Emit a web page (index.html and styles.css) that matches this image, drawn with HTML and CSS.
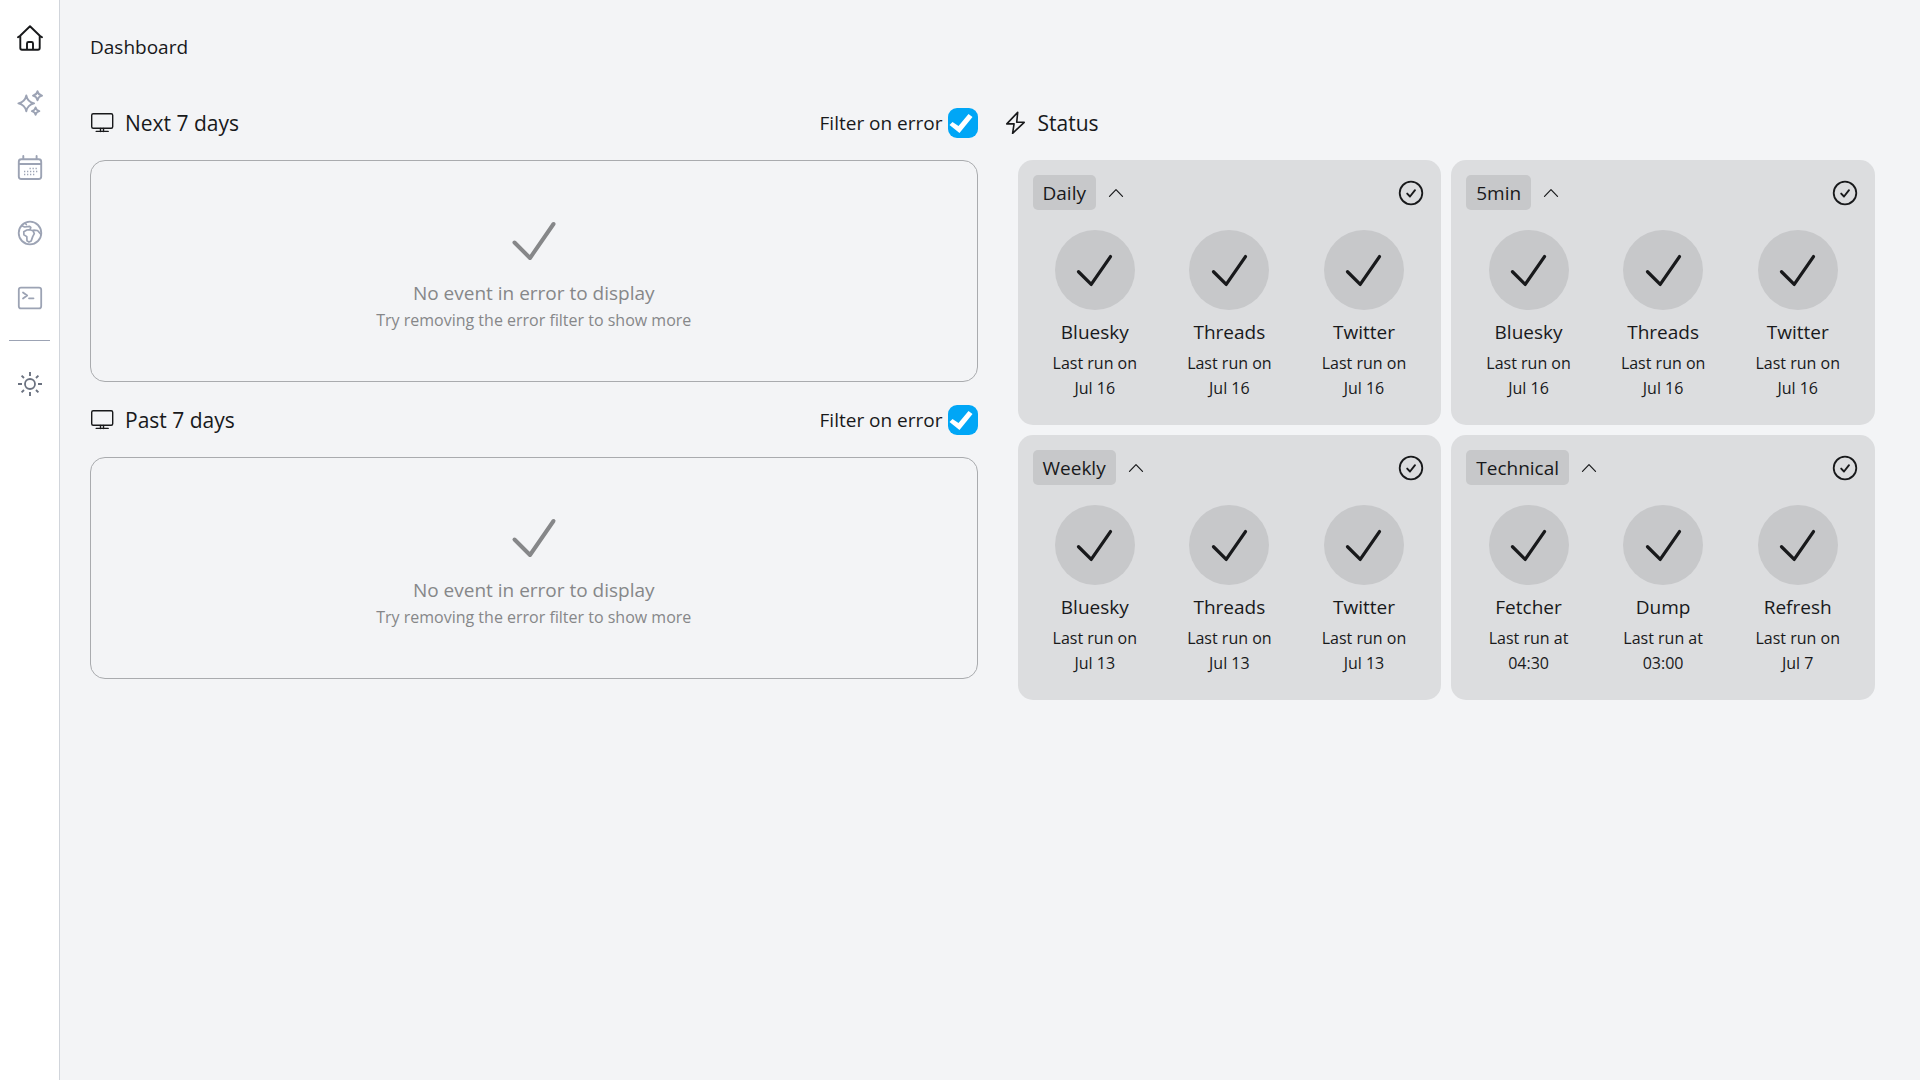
FILE: index.html
```html
<!DOCTYPE html>
<html lang="en">
<head>
<meta charset="utf-8">
<meta name="viewport" content="width=device-width, initial-scale=1">
<title>Dashboard</title>
<link rel="stylesheet" href="styles.css">
</head>
<body>
<svg class="sprite" aria-hidden="true">
  <symbol id="check" viewBox="0 0 50 50"><path d="M5.5 26.5 21 42 44.5 8" stroke-width="4"/></symbol>
  <symbol id="check-circle" viewBox="0 0 26 26"><circle cx="13" cy="13" r="11.3" stroke-width="1.8"/><path d="M9.2 13.6l2.8 2.9 5-6.3" stroke-width="1.9"/></symbol>
  <symbol id="chevron" viewBox="0 0 16 16"><path d="M1.5 11.3 8 4.7l6.500 6.600" stroke-width="1.2"/></symbol>
  <symbol id="monitor" viewBox="0 0 24 24"><rect x="1.700" y="2.700" width="21" height="14.500" rx="1.500" stroke-width="1.400"/><path d="M10.500 17.500v3m3-3v3M6.200 20.400h12" stroke-width="1.400"/></symbol>
  <symbol id="bolt" viewBox="0 0 24 24"><path d="M14.700 1.300 3.800 12.900l7.300-.2L9.600 22.300 21.200 11.300h-7.500z" stroke-width="1.600"/></symbol>
</svg>
<div class="app">
  <nav class="sidebar" aria-label="Main">
    <a class="nav-link active" href="#" aria-label="Home"><svg viewBox="0 0 26 26"><path d="M1 12.300 3.200 10.800 13 1.300l9.800 9.500 2.200 1.500M3.300 11v12q0 1.700 1.700 1.700h16q1.700 0 1.700-1.700V11M10 24.500v-6q0-1.500 1.500-1.500h3q1.500 0 1.500 1.500v6" stroke-width="1.900"/></svg></a>
    <a class="nav-link" href="#" aria-label="Generate"><svg viewBox="0 0 26 26"><path d="M9.300 5.500q1.200 6.500 7.800 7.900-6.600 1.400-7.800 7.900-1.300-6.500-7.900-7.900 6.600-1.400 7.900-7.900zM20.500 1.200q.8 3.600 4.500 4.500-3.700.9-4.500 4.500-.8-3.600-4.500-4.500 3.700-.9 4.500-4.500zM18.600 17.400q.7 3 3.700 3.800-3 .8-3.700 3.700-.7-2.900-3.700-3.700 3-.8 3.700-3.800z" stroke-width="1.900"/></svg></a>
    <a class="nav-link" href="#" aria-label="Calendar"><svg viewBox="0 0 26 26"><rect x="1.800" y="4.200" width="22.400" height="19.800" rx="2.500" stroke-width="1.900"/><path d="M2 9h22M6.300 1v3m13.300-3v3" stroke-width="1.900"/><path d="M12.500 13.500h8M7 16.500h13.500M7 19.500h10.500" stroke-width="1.700" stroke-dasharray="1.300 1.700" stroke-linecap="butt"/></svg></a>
    <a class="nav-link" href="#" aria-label="World"><svg viewBox="0 0 26 26"><circle cx="13" cy="13" r="11.300" stroke-width="1.800"/><path d="M4.800 5.800 7.600 7l5-.6 1.200 1-.8 2.300-3.200.3-3 1.700.1 3 2.900 1.900.2 4.200 2 1.300 2.200-1.200 1.500-4.300 1.600-3-1.400-3-3.100-.8M8.300 3.300l1 1.200M24 14.300l-3.500-3.800-3.700-.3" stroke-width="1.700"/></svg></a>
    <a class="nav-link" href="#" aria-label="Console"><svg viewBox="0 0 26 26"><rect x="1.800" y="2.600" width="22.400" height="20.800" rx="2.200" stroke-width="1.800"/><path d="m6 7.500 4.200 3-4.200 3M12 13.300h4.500" stroke-width="1.800"/></svg></a>
    <hr class="divider">
    <button class="nav-link theme" type="button" aria-label="Theme"><svg viewBox="0 0 26 26"><circle cx="13" cy="13" r="5" stroke-width="1.800"/><path d="M13 1v4m0 16V25M1 13h4m16 0H25M4.600 4.600l2.400 2.400m12 12 2.400 2.400M4.600 21.400l2.400-2.400M19 7l2.400-2.400" stroke-width="1.900" stroke-linecap="butt"/></svg></button>
  </nav>
  <main class="content">
    <h1 class="page-title">Dashboard</h1>
    <div class="columns">
      <div class="events">
        <section>
          <div class="section-head">
            <h2 class="section-title"><svg><use href="#monitor"/></svg>Next 7 days</h2>
            <label class="filter">Filter on error<input type="checkbox" checked></label>
          </div>
          <div class="empty"><svg><use href="#check"/></svg><p class="empty-title">No event in error to display</p><p class="empty-hint">Try removing the error filter to show more</p></div>
        </section>
        <section>
          <div class="section-head">
            <h2 class="section-title"><svg><use href="#monitor"/></svg>Past 7 days</h2>
            <label class="filter">Filter on error<input type="checkbox" checked></label>
          </div>
          <div class="empty"><svg><use href="#check"/></svg><p class="empty-title">No event in error to display</p><p class="empty-hint">Try removing the error filter to show more</p></div>
        </section>
      </div>
      <section>
        <div class="section-head">
          <h2 class="section-title"><svg><use href="#bolt"/></svg>Status</h2>
        </div>
        <div class="cards">
          <article class="card">
            <div class="card-head"><h3 class="chip">Daily</h3><button class="toggle" type="button" aria-label="Collapse Daily"><svg><use href="#chevron"/></svg></button><svg class="state"><use href="#check-circle"/></svg></div>
            <ul class="jobs">
              <li class="job"><span class="badge"><svg><use href="#check"/></svg></span><span class="job-name">Bluesky</span><span class="job-run">Last run on<br>Jul 16</span></li>
              <li class="job"><span class="badge"><svg><use href="#check"/></svg></span><span class="job-name">Threads</span><span class="job-run">Last run on<br>Jul 16</span></li>
              <li class="job"><span class="badge"><svg><use href="#check"/></svg></span><span class="job-name">Twitter</span><span class="job-run">Last run on<br>Jul 16</span></li>
            </ul>
          </article>
          <article class="card">
            <div class="card-head"><h3 class="chip">5min</h3><button class="toggle" type="button" aria-label="Collapse 5min"><svg><use href="#chevron"/></svg></button><svg class="state"><use href="#check-circle"/></svg></div>
            <ul class="jobs">
              <li class="job"><span class="badge"><svg><use href="#check"/></svg></span><span class="job-name">Bluesky</span><span class="job-run">Last run on<br>Jul 16</span></li>
              <li class="job"><span class="badge"><svg><use href="#check"/></svg></span><span class="job-name">Threads</span><span class="job-run">Last run on<br>Jul 16</span></li>
              <li class="job"><span class="badge"><svg><use href="#check"/></svg></span><span class="job-name">Twitter</span><span class="job-run">Last run on<br>Jul 16</span></li>
            </ul>
          </article>
          <article class="card">
            <div class="card-head"><h3 class="chip">Weekly</h3><button class="toggle" type="button" aria-label="Collapse Weekly"><svg><use href="#chevron"/></svg></button><svg class="state"><use href="#check-circle"/></svg></div>
            <ul class="jobs">
              <li class="job"><span class="badge"><svg><use href="#check"/></svg></span><span class="job-name">Bluesky</span><span class="job-run">Last run on<br>Jul 13</span></li>
              <li class="job"><span class="badge"><svg><use href="#check"/></svg></span><span class="job-name">Threads</span><span class="job-run">Last run on<br>Jul 13</span></li>
              <li class="job"><span class="badge"><svg><use href="#check"/></svg></span><span class="job-name">Twitter</span><span class="job-run">Last run on<br>Jul 13</span></li>
            </ul>
          </article>
          <article class="card">
            <div class="card-head"><h3 class="chip">Technical</h3><button class="toggle" type="button" aria-label="Collapse Technical"><svg><use href="#chevron"/></svg></button><svg class="state"><use href="#check-circle"/></svg></div>
            <ul class="jobs">
              <li class="job"><span class="badge"><svg><use href="#check"/></svg></span><span class="job-name">Fetcher</span><span class="job-run">Last run at<br>04:30</span></li>
              <li class="job"><span class="badge"><svg><use href="#check"/></svg></span><span class="job-name">Dump</span><span class="job-run">Last run at<br>03:00</span></li>
              <li class="job"><span class="badge"><svg><use href="#check"/></svg></span><span class="job-name">Refresh</span><span class="job-run">Last run on<br>Jul 7</span></li>
            </ul>
          </article>
        </div>
      </section>
    </div>
  </main>
</div>
</body>
</html>
```
FILE: styles.css
```css
* { box-sizing: border-box; }

body {
  margin: 0;
  background: #f3f4f6;
  color: #18191b;
  font: 19px/30px "Segoe UI", "Open Sans", "Noto Sans", sans-serif;
}

h1, h2, h3, p, ul { margin: 0; padding: 0; font-weight: 400; }
ul { list-style: none; }
button { padding: 0; border: 0; background: none; color: inherit; font: inherit; cursor: pointer; }

svg {
  display: block;
  fill: none;
  stroke: currentColor;
  stroke-linecap: round;
  stroke-linejoin: round;
}
.sprite { display: none; }

.app { display: flex; min-height: 100vh; }

.sidebar {
  display: flex;
  flex-direction: column;
  align-items: center;
  flex: none;
  width: 60px;
  padding-top: 5px;
  background: #fff;
  border-right: 1px solid #d1d5db;
}
.nav-link {
  display: flex;
  align-items: center;
  justify-content: center;
  width: 100%;
  height: 65px;
  color: #9ca3b4;
}
.nav-link svg { width: 26px; height: 26px; }
.nav-link.active { color: #18191b; }
.nav-link.theme { color: #6b7280; }
.divider { width: 41px; margin: 10px 0; border: 0; border-top: 1px solid #9ca3b4; }

.content { flex: 1; min-width: 0; padding: 32px 30px; }
.page-title { font-size: 19px; margin-bottom: 46px; }

.columns { display: grid; grid-template-columns: 1fr 1fr; gap: 25px; align-items: start; }
.events { display: grid; gap: 23px; }

.section-head {
  display: flex;
  justify-content: space-between;
  align-items: center;
  height: 30px;
  margin-bottom: 22px;
}
.section-title { display: flex; align-items: center; gap: 11px; font-size: 21px; line-height: 32px; }
.section-title svg { width: 24px; height: 24px; }

.filter { display: flex; align-items: center; gap: 5px; line-height: 32px; }
.filter input {
  appearance: none;
  width: 30px;
  height: 30px;
  margin: 0;
  border-radius: 9px;
  background: #00a6f6;
}
.filter input:checked::after {
  content: "";
  display: block;
  width: 30px;
  height: 30px;
  background: #fff;
  clip-path: polygon(2px 17px, 5px 14px, 11px 18px, 21px 6px, 25px 9px, 12px 25px);
}

.empty {
  display: flex;
  flex-direction: column;
  align-items: center;
  padding: 55px 20px 48px;
  border: 1px solid #a9abae;
  border-radius: 15px;
  color: #868789;
  text-align: center;
}
.empty svg { width: 50px; height: 50px; margin-bottom: 12px; }
.empty-hint { font-size: 16px; line-height: 25px; }

.cards { display: grid; grid-template-columns: 1fr 1fr; gap: 10px; padding: 0 15px; }
.card { padding: 15px 10px 24px; border-radius: 15px; background: #dcdddf; }
.card-head { display: flex; align-items: center; padding: 0 5px; margin-bottom: 20px; }
.chip { padding: 1px 10px 0; border-radius: 5px; background: #c7c8ca; font-size: 19px; line-height: 34px; }
.toggle { margin-left: 12px; }
.toggle svg { width: 16px; height: 16px; }
.state { width: 26px; height: 26px; margin: 0 2px 0 auto; }

.jobs { display: grid; grid-template-columns: repeat(3, 1fr); }
.job { display: flex; flex-direction: column; align-items: center; text-align: center; }
.badge {
  display: flex;
  align-items: center;
  justify-content: center;
  width: 80px;
  height: 80px;
  border-radius: 50%;
  background: #c7c8ca;
}
.badge svg { width: 41px; height: 41px; }
.job-name { margin: 7px 0 4px; }
.job-run { font-size: 16px; line-height: 25px; }
```
